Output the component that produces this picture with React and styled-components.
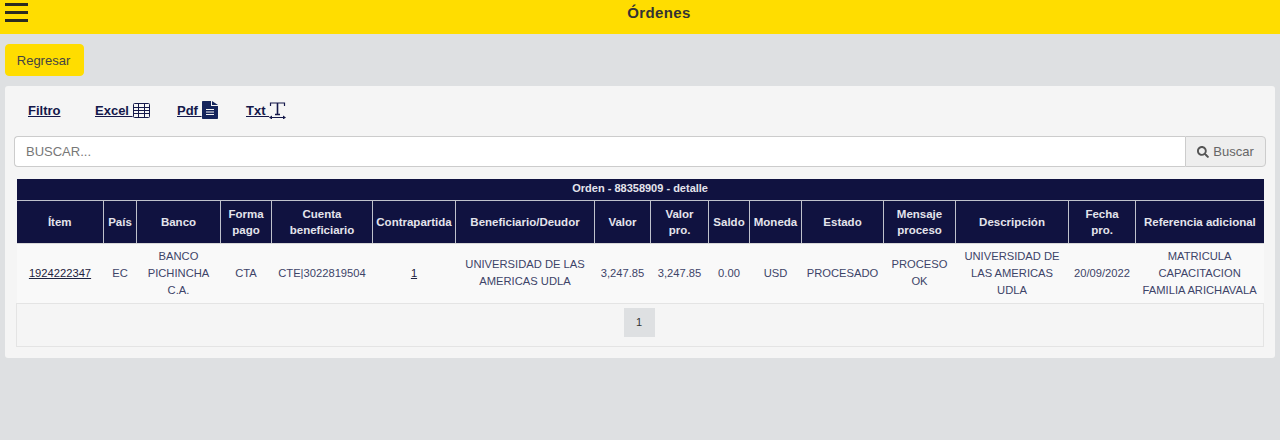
import styled, { createGlobalStyle } from "styled-components";
import { FaSearch } from "react-icons/fa";

const GlobalStyle = createGlobalStyle`
  html, body {
    margin: 0;
    padding: 0;
    background: #dee0e2;
    font-family: "Liberation Sans", Arial, sans-serif;
    font-size: 12px;
    color: #333;
  }
`;

const columns = [
  { label: "Ítem", width: 87 },
  { label: "País", width: 33 },
  { label: "Banco", width: 84 },
  { label: "Forma pago", width: 51 },
  { label: "Cuenta beneficiario", width: 101 },
  { label: "Contrapartida", width: 83 },
  { label: "Beneficiario/Deudor", width: 139 },
  { label: "Valor", width: 56 },
  { label: "Valor pro.", width: 58, narrow: true },
  { label: "Saldo", width: 41 },
  { label: "Moneda", width: 52 },
  { label: "Estado", width: 82 },
  { label: "Mensaje proceso", width: 72 },
  { label: "Descripción", width: 113 },
  { label: "Fecha pro.", width: 67, narrow: true },
  { label: "Referencia adicional", width: 128 },
];

function TableIcon() {
  return (
    <svg width="17" height="15" viewBox="0 0 17 15" fill="none" stroke="#14184a" strokeWidth="1">
      <rect x="0.5" y="0.5" width="16" height="14" rx="1" />
      <path d="M0.5 4.5H16.5M0.5 7.5H16.5M0.5 10.5H16.5M5.5 0.5V14.5M11.5 0.5V14.5" />
    </svg>
  );
}

function FileIcon() {
  return (
    <svg width="16" height="18" viewBox="0 0 16 18">
      <path d="M0 1C0 .4.4 0 1 0H9V5H16V17C16 17.6 15.6 18 15 18H1C.4 18 0 17.6 0 17Z" fill="#14245c" />
      <path d="M10 0L16 4H10Z" fill="#14245c" />
      <path d="M4 8.5H12M4 11H12M4 13.5H12" stroke="#f5f5f5" strokeWidth="1.2" />
    </svg>
  );
}

function TextIcon() {
  return (
    <svg width="17" height="17" viewBox="0 0 17 17" fill="none" stroke="#14184a">
      <path d="M1.5 4V1H15.5V4" strokeWidth="1.2" />
      <path d="M8.5 1V12.5M6 12.5H11" strokeWidth="1.6" />
      <path d="M1 15.5H16" strokeWidth="1" />
      <path d="M0 15.5L3 13.5V17.5ZM17 15.5L14 13.5V17.5Z" fill="#14184a" stroke="none" />
    </svg>
  );
}

function App() {
  return (
    <>
      <GlobalStyle />
      <Navbar>
        <MenuButton aria-label="menu">
          <span />
          <span />
          <span />
        </MenuButton>
        <NavTitle>Órdenes</NavTitle>
      </Navbar>
      <Content>
        <BackButton>Regresar</BackButton>
        <Panel>
          <Toolbar>
            <ToolLink $width={67}>Filtro</ToolLink>
            <ToolLink $width={82}>
              Excel <TableIcon />
            </ToolLink>
            <ToolLink $width={69}>
              Pdf <FileIcon />
            </ToolLink>
            <ToolLink>
              Txt <TextIcon />
            </ToolLink>
          </Toolbar>
          <SearchGroup>
            <SearchInput placeholder="BUSCAR..." />
            <SearchButton>
              <FaSearch size={12} /> Buscar
            </SearchButton>
          </SearchGroup>
          <Table>
            <colgroup>
              {columns.map((c) => (
                <col key={c.label} style={{ width: c.width }} />
              ))}
            </colgroup>
            <thead>
              <tr>
                <TitleCell colSpan={16}>Orden - 88358909 - detalle</TitleCell>
              </tr>
              <tr>
                {columns.map((c) => (
                  <HeadCell key={c.label} $narrow={c.narrow}>
                    {c.label}
                  </HeadCell>
                ))}
              </tr>
            </thead>
            <tbody>
              <tr>
                <Cell>
                  <ItemLink>1924222347</ItemLink>
                </Cell>
                <Cell>EC</Cell>
                <Cell>BANCO PICHINCHA C.A.</Cell>
                <Cell>CTA</Cell>
                <Cell>CTE|3022819504</Cell>
                <Cell>
                  <ItemLink>1</ItemLink>
                </Cell>
                <Cell>UNIVERSIDAD DE LAS AMERICAS UDLA</Cell>
                <Cell>3,247.85</Cell>
                <Cell>3,247.85</Cell>
                <Cell>0.00</Cell>
                <Cell>USD</Cell>
                <Cell>PROCESADO</Cell>
                <Cell>PROCESO OK</Cell>
                <Cell>UNIVERSIDAD DE LAS AMERICAS UDLA</Cell>
                <Cell>20/09/2022</Cell>
                <Cell>MATRICULA CAPACITACION FAMILIA ARICHAVALA</Cell>
              </tr>
            </tbody>
            <tfoot>
              <tr>
                <PagerCell colSpan={16}>
                  <PageNumber>1</PageNumber>
                </PagerCell>
              </tr>
            </tfoot>
          </Table>
        </Panel>
      </Content>
    </>
  );
}

const Navbar = styled.header`
  position: relative;
  height: 34px;
  box-sizing: border-box;
  padding: 0 0 9px 38px;
  background: #ffdd00;
  display: flex;
  align-items: center;
  justify-content: center;
`;

const MenuButton = styled.div`
  position: absolute;
  left: 5px;
  top: 3px;
  width: 23px;
  display: flex;
  flex-direction: column;
  gap: 5px;

  span {
    display: block;
    height: 3px;
    background: #2b2b20;
  }
`;

const NavTitle = styled.h1`
  margin: 0;
  font-size: 15px;
  letter-spacing: 0.4px;
  font-weight: bold;
  color: #333;
`;

const Content = styled.main`
  padding: 10px 5px 0;
`;

const BackButton = styled.button`
  display: block;
  width: 79px;
  height: 32px;
  padding: 0 2px 0 0;
  border: 1px solid #ffdd00;
  border-radius: 4px;
  background: #ffdd00;
  font-family: inherit;
  font-size: 13px;
  color: #444;
`;

const Panel = styled.section`
  margin-top: 10px;
  height: 272px;
  box-sizing: border-box;
  padding: 0 9px;
  background: #f5f5f5;
  border-radius: 3px;
`;

const Toolbar = styled.nav`
  display: flex;
  align-items: center;
  height: 50px;
  padding: 0 0 2px 14px;
  box-sizing: border-box;
`;

const ToolLink = styled.a`
  display: flex;
  align-items: center;
  gap: 0;
  width: ${(p) => (p.$width ? `${p.$width}px` : "auto")};
  font-size: 13px;
  font-weight: bold;
  color: #14184a;
  text-decoration: underline;
  white-space: pre;
`;

const SearchGroup = styled.div`
  display: flex;
  height: 31px;
`;

const SearchInput = styled.input`
  flex: 1;
  min-width: 0;
  box-sizing: border-box;
  padding: 0 11px;
  border: 1px solid #ccc;
  border-right: 0;
  border-radius: 4px 0 0 4px;
  background: #fff;
  font-family: inherit;
  font-size: 13px;

  &::placeholder {
    color: #777;
    opacity: 1;
  }
`;

const SearchButton = styled.button`
  width: 81px;
  display: flex;
  align-items: center;
  justify-content: center;
  gap: 4px;
  padding: 0;
  border: 1px solid #ccc;
  border-radius: 0 4px 4px 0;
  background: #eee;
  font-family: inherit;
  font-size: 13px;
  color: #666;

  svg {
    color: #555;
  }
`;

const Table = styled.table`
  width: 1247px;
  margin: 12px 0 0 2px;
  table-layout: fixed;
  border-collapse: collapse;
`;

const TitleCell = styled.th`
  height: 21px;
  padding: 0 0 2px;
  box-sizing: border-box;
  background: #101240;
  color: #e4e4ec;
  font-size: 11px;
  font-weight: bold;
  text-align: center;
`;

const HeadCell = styled.th`
  height: 43px;
  box-sizing: border-box;
  padding: 0 ${(p) => (p.$narrow ? "8px" : "2px")};
  background: #101240;
  border: 1px solid #bfc1cc;
  border-bottom: 1px solid #d8d8d8;
  color: #e4e4ec;
  font-size: 11.5px;
  line-height: 16px;
  font-weight: bold;
  text-align: center;
  vertical-align: middle;

  &:first-child {
    border-left: 0;
  }

  &:last-child {
    border-right: 0;
  }
`;

const Cell = styled.td`
  height: 60px;
  box-sizing: border-box;
  padding: 0 3px;
  background: #f9f9f9;
  color: #3d4468;
  font-size: 11.2px;
  line-height: 17px;
  text-align: center;
  vertical-align: middle;
`;

const ItemLink = styled.a`
  color: #1d2240;
  text-decoration: underline;
`;

const PagerCell = styled.td`
  height: 43px;
  box-sizing: border-box;
  padding: 4px 2px 0 0;
  border: 1px solid #e4e4e4;
  background: #f5f5f5;
  text-align: center;
  vertical-align: top;
`;

const PageNumber = styled.span`
  display: inline-block;
  width: 31px;
  height: 29px;
  line-height: 28px;
  background: #dee0e2;
  color: #333;
  font-size: 11px;
`;

export default App;
